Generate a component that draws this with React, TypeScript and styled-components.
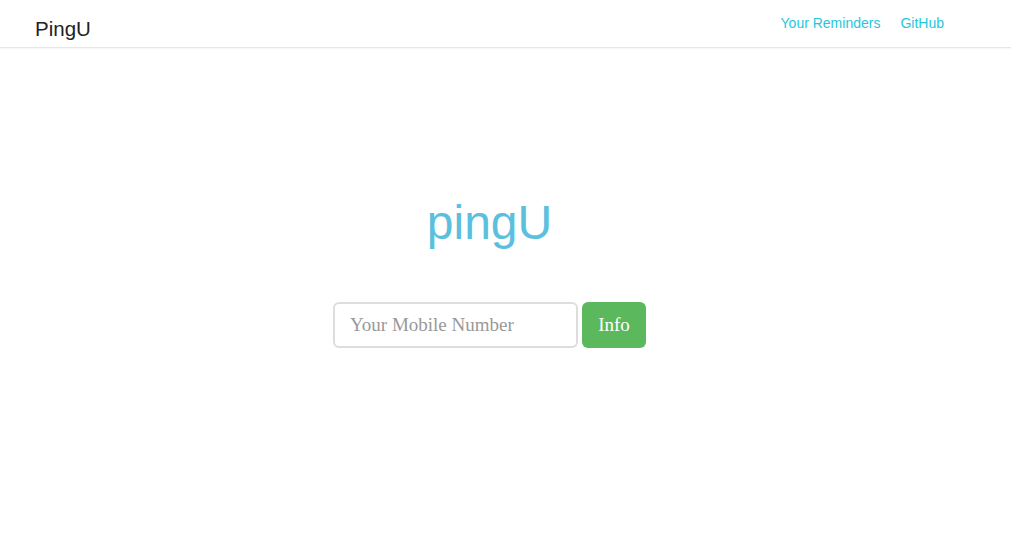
import React from "react";
import styled, { createGlobalStyle } from "styled-components";

const Global = createGlobalStyle`
  html, body { margin: 0; padding: 0; background: #fff; }
  body { font-family: "Liberation Sans", Arial, sans-serif; }
`;

const Nav = styled.nav`
  height: 47px;
  border-bottom: 1px solid #e7e7e7;
  box-shadow: 0 1px 1px rgba(0, 0, 0, 0.03);
  display: flex;
  align-items: center;
  justify-content: space-between;
  padding: 0 67px 0 35px;
  box-sizing: content-box;
`;

const Brand = styled.a`
  font-size: 20.5px;
  color: #222;
  text-decoration: none;
  margin-top: 10px;
`;

const Links = styled.div`
  display: flex;
  gap: 20px;
  margin-top: -2px;
`;

const NavLink = styled.a`
  font-size: 14px;
  color: #1fc8db;
  text-decoration: none;
`;

const Main = styled.main`
  display: flex;
  flex-direction: column;
  align-items: center;
  padding: 145px 32px 0 0;
`;

const Title = styled.h1`
  margin: 0;
  font-weight: 400;
  font-size: 48px;
  color: #5bc0de;
  line-height: 60px;
`;

const Form = styled.form`
  display: flex;
  gap: 4px;
  margin-top: 49px;
`;

const Input = styled.input`
  width: 245px;
  height: 46px;
  box-sizing: border-box;
  border: 2px solid #dddddd;
  border-radius: 6px;
  padding: 0 15px;
  font-family: "Liberation Serif", "Times New Roman", serif;
  font-size: 19px;
  color: #555;
  outline: none;
  &::placeholder { color: #999; }
`;

const Button = styled.button`
  width: 64px;
  height: 46px;
  border: none;
  border-radius: 6px;
  background: #5cb85c;
  color: #fff;
  font-family: "Liberation Serif", "Times New Roman", serif;
  font-size: 19px;
  cursor: pointer;
`;

export default function App() {
  return (
    <>
      <Global />
      <Nav>
        <Brand href="#">PingU</Brand>
        <Links>
          <NavLink href="#">Your Reminders</NavLink>
          <NavLink href="#">GitHub</NavLink>
        </Links>
      </Nav>
      <Main>
        <Title>pingU</Title>
        <Form onSubmit={(e) => e.preventDefault()}>
          <Input placeholder="Your Mobile Number" />
          <Button type="submit">Info</Button>
        </Form>
      </Main>
    </>
  );
}
